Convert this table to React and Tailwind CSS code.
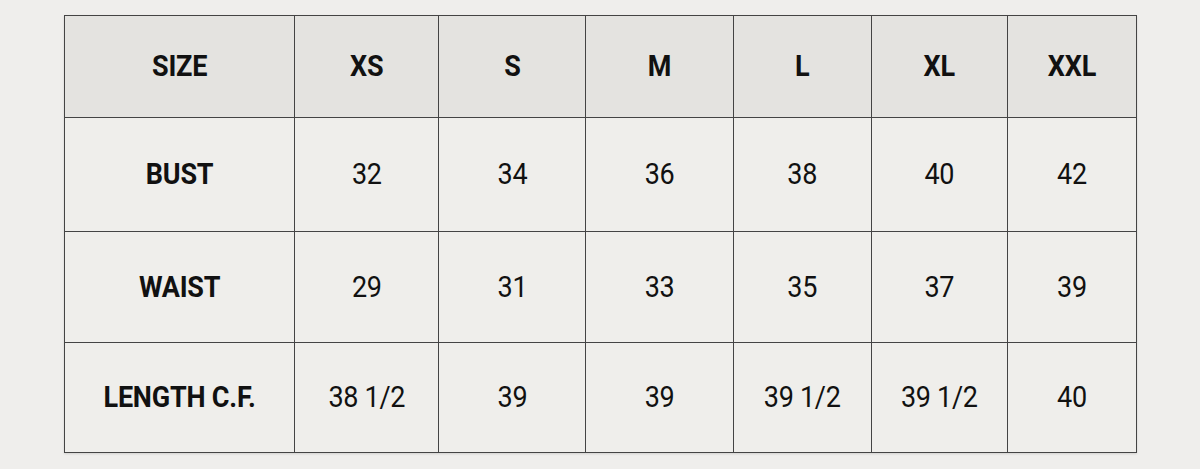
const sizes = ["XS", "S", "M", "L", "XL", "XXL"];
const rows = [
  { label: "BUST", values: ["32", "34", "36", "38", "40", "42"], h: "h-[114px]" },
  { label: "WAIST", values: ["29", "31", "33", "35", "37", "39"], h: "h-[111px]" },
  { label: "LENGTH C.F.", values: ["38 1/2", "39", "39", "39 1/2", "39 1/2", "40"], h: "h-[110px]" },
];
const widths = ["w-[230px]", "w-[144px]", "w-[147px]", "w-[147px]", "w-[138px]", "w-[136px]", "w-[129px]"];

function Txt({ children }) {
  return <span className="inline-block scale-y-[1.1]">{children}</span>;
}

export default function App() {
  return (
    <div className="w-[1200px] h-[469px] bg-[#efeeec] pt-[15px] pl-[64px] font-['Roboto',sans-serif] text-[#111]">
      <table className="border-collapse border border-[#444] table-fixed w-[1073px] shadow-[0_1px_2px_rgba(0,0,0,0.12)]">
        <colgroup>
          {widths.map((w, i) => (
            <col key={i} className={w} />
          ))}
        </colgroup>
        <thead>
          <tr className="h-[102px] bg-[#e4e3e0]">
            <th className="border border-[#444] text-[27px] font-bold tracking-[-0.2px] text-center">
              <Txt>SIZE</Txt>
            </th>
            {sizes.map((s) => (
              <th key={s} className="border border-[#444] text-[27px] font-bold tracking-[-0.2px] text-center">
                <Txt>{s}</Txt>
              </th>
            ))}
          </tr>
        </thead>
        <tbody>
          {rows.map((r) => (
            <tr key={r.label} className={`${r.h} bg-[#efeeeb]`}>
              <td className="border border-[#444] text-[27px] font-bold tracking-[-0.2px] text-center">
                <Txt>{r.label}</Txt>
              </td>
              {r.values.map((v, i) => (
                <td key={i} className="border border-[#444] text-[27px] tracking-[-0.3px] text-center">
                  <Txt>{v}</Txt>
                </td>
              ))}
            </tr>
          ))}
        </tbody>
      </table>
    </div>
  );
}
